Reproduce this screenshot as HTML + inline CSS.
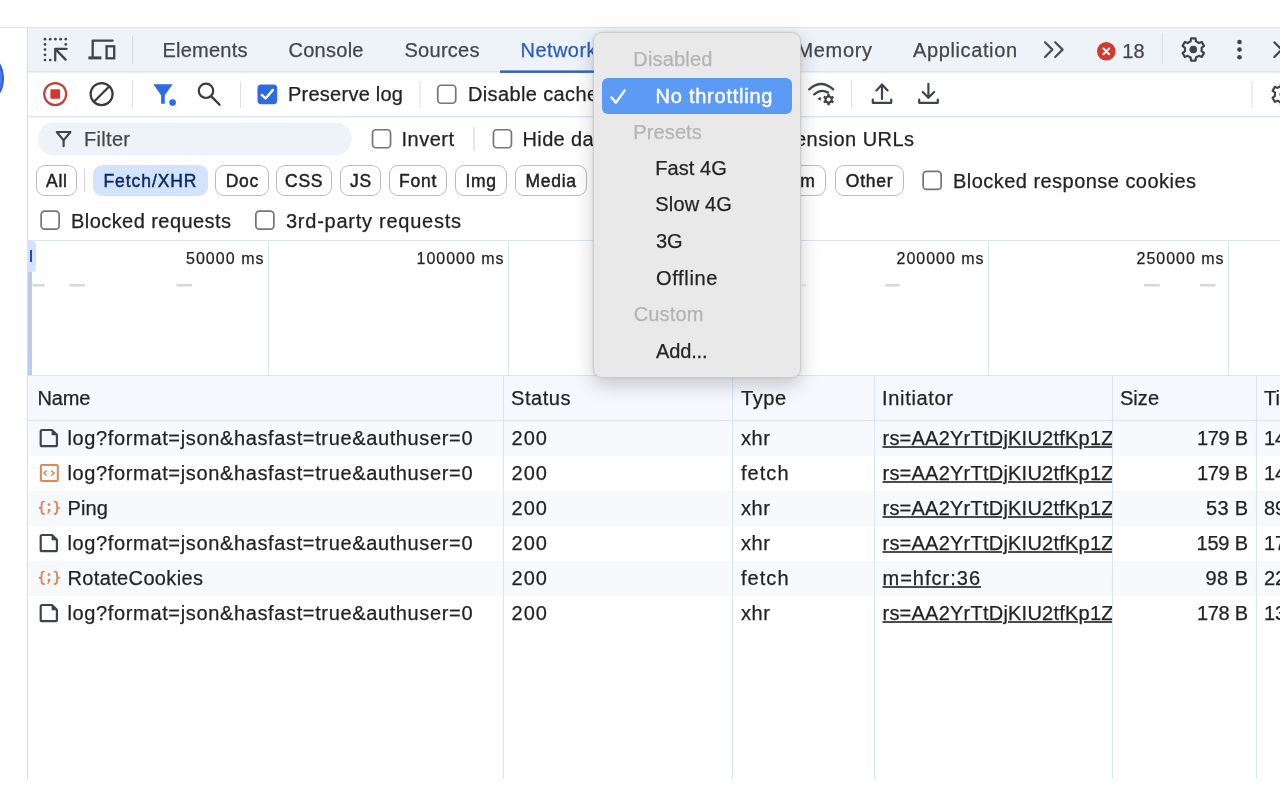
<!DOCTYPE html>
<html><head><meta charset="utf-8"><title>DevTools</title>
<style>
html,body{margin:0;padding:0;background:#fff}
body{width:1280px;height:800px;position:relative;overflow:hidden;font-family:"Liberation Sans",sans-serif;color:#1f1f1f}
#w{position:absolute;left:0;top:0;width:1280px;height:800px;overflow:hidden;will-change:transform}
.a{position:absolute;box-sizing:border-box}
.t{position:absolute;white-space:pre;line-height:24px;font-size:20px;-webkit-text-stroke-width:0.25px}
svg{position:absolute;overflow:visible}
</style></head><body><div id="w">
<div class="a" style="left:0px;top:27px;width:1280px;height:1px;background:#e1e4e9;"></div>
<div class="a" style="left:27px;top:28px;width:1px;height:751px;background:#d9dde6;"></div>
<div class="a" style="left:-57px;top:48px;width:61px;height:61px;border-radius:50%;border:2px solid #3a5fcc;background:#4a7af0"></div>
<div class="a" style="left:28px;top:28px;width:1252px;height:43px;background:#eef2f9;"></div>
<div class="a" style="left:28px;top:71px;width:1252px;height:1px;background:#dbe4f6;"></div>
<div class="a" style="left:28px;top:72px;width:1252px;height:1px;background:#ecf0f9;"></div>
<div class="a" style="left:28px;top:116px;width:1252px;height:1px;background:#dde5f6;"></div>
<div class="a" style="left:28px;top:117px;width:1252px;height:1px;background:#f1f4fb;"></div>
<svg style="left:0;top:0" width="400" height="200"><rect x="37.8" y="122.5" width="314" height="33" rx="16.5" fill="#eef2f9"/></svg>
<div class="a" style="left:28px;top:240px;width:1252px;height:1px;background:#dae4f7;"></div>
<div class="a" style="left:268px;top:241px;width:1px;height:134px;background:#dae4f7;"></div>
<div class="a" style="left:508px;top:241px;width:1px;height:134px;background:#dae4f7;"></div>
<div class="a" style="left:748px;top:241px;width:1px;height:134px;background:#dae4f7;"></div>
<div class="a" style="left:988px;top:241px;width:1px;height:134px;background:#dae4f7;"></div>
<div class="a" style="left:1228px;top:241px;width:1px;height:134px;background:#dae4f7;"></div>
<div class="a" style="left:28px;top:241px;width:4px;height:134px;background:#b9cdf3;"></div>
<div class="a" style="left:27px;top:241px;width:9px;height:31px;background:#d3e3fd;border-radius:0 4px 4px 0"></div>
<div class="a" style="left:30px;top:250px;width:2px;height:12px;background:#1a4fa8;"></div>
<div class="a" style="left:28px;top:375px;width:1252px;height:45px;background:#f6f8fd;"></div>
<div class="a" style="left:28px;top:375px;width:1252px;height:1px;background:#dae4f7;"></div>
<div class="a" style="left:28px;top:420px;width:1252px;height:1px;background:#dae4f7;"></div>
<div class="a" style="left:28px;top:421px;width:1252px;height:35px;background:#f7f9fd;"></div>
<div class="a" style="left:28px;top:491px;width:1252px;height:35px;background:#f7f9fd;"></div>
<div class="a" style="left:28px;top:561px;width:1252px;height:35px;background:#f7f9fd;"></div>
<div class="a" style="left:503px;top:376px;width:1px;height:403px;background:#dae4f7;"></div>
<div class="a" style="left:732px;top:376px;width:1px;height:403px;background:#dae4f7;"></div>
<div class="a" style="left:874px;top:376px;width:1px;height:403px;background:#dae4f7;"></div>
<div class="a" style="left:1112px;top:376px;width:1px;height:403px;background:#dae4f7;"></div>
<div class="a" style="left:1256px;top:376px;width:1px;height:403px;background:#dae4f7;"></div>
<span class="t" style="top:38.07px;font-size:20px;letter-spacing:0.232px;left:162.50px;color:#474747;">Elements</span>
<span class="t" style="top:38.07px;font-size:20px;letter-spacing:0.268px;left:288.50px;color:#474747;">Console</span>
<span class="t" style="top:38.07px;font-size:20px;letter-spacing:0.271px;left:404.50px;color:#474747;">Sources</span>
<span class="t" style="top:38.07px;font-size:20px;letter-spacing:0.440px;left:520.50px;color:#2a5cc0;">Network</span>
<span class="t" style="top:38.07px;font-size:20px;letter-spacing:0.653px;left:796.50px;color:#474747;">Memory</span>
<span class="t" style="top:38.07px;font-size:20px;letter-spacing:0.616px;left:913.00px;color:#474747;">Application</span>
<span class="t" style="top:39.27px;font-size:20px;left:1122.30px;color:#474747;">18</span>
<span class="t" style="top:82.07px;font-size:20px;letter-spacing:0.247px;left:288.00px;color:#232323;">Preserve log</span>
<span class="t" style="top:82.07px;font-size:20px;letter-spacing:0.365px;left:468.00px;color:#232323;">Disable cache</span>
<span class="t" style="top:127.32px;font-size:20px;letter-spacing:0.309px;left:84.00px;color:#474747;">Filter</span>
<span class="t" style="top:127.32px;font-size:20px;letter-spacing:0.494px;left:401.50px;color:#232323;">Invert</span>
<span class="t" style="top:127.32px;font-size:20px;letter-spacing:0.370px;left:522.50px;color:#232323;">Hide data URLs</span>
<span class="t" style="top:127.32px;font-size:20px;letter-spacing:0.451px;right:365.55px;color:#232323;">Hide extension URLs</span>
<span class="t" style="top:208.67px;font-size:20px;letter-spacing:0.439px;left:71.00px;color:#232323;">Blocked requests</span>
<span class="t" style="top:208.67px;font-size:20px;letter-spacing:0.747px;left:286.00px;color:#232323;">3rd-party requests</span>
<span class="t" style="top:168.67px;font-size:20px;letter-spacing:0.463px;left:953.00px;color:#232323;">Blocked response cookies</span>
<div class="a" style="left:36px;top:165px;width:41px;height:31px;border-radius:9px;background:#fff;border:1px solid #bcbcbc"></div>
<span class="t" style="top:169.14px;font-size:17.5px;letter-spacing:0.750px;left:46.02px;color:#232323;-webkit-text-stroke:0.45px #232323;">All</span>
<div class="a" style="left:84px;top:168px;width:1px;height:24px;background:#d5dbe8;"></div>
<div class="a" style="left:473px;top:127px;width:2px;height:24px;background:#e3e7f1;"></div>
<div class="a" style="left:92.5px;top:165px;width:115.0px;height:31px;border-radius:9px;background:#d3e3fd"></div>
<span class="t" style="top:169.14px;font-size:17.5px;letter-spacing:0.928px;left:103.50px;color:#0a2a63;-webkit-text-stroke:0.45px #0a2a63;">Fetch/XHR</span>
<div class="a" style="left:215px;top:165px;width:54px;height:31px;border-radius:9px;background:#fff;border:1px solid #bcbcbc"></div>
<span class="t" style="top:169.14px;font-size:17.5px;letter-spacing:0.750px;left:225.69px;color:#232323;-webkit-text-stroke:0.45px #232323;">Doc</span>
<div class="a" style="left:276px;top:165px;width:55.5px;height:31px;border-radius:9px;background:#fff;border:1px solid #bcbcbc"></div>
<span class="t" style="top:169.14px;font-size:17.5px;letter-spacing:0.750px;left:285.01px;color:#232323;-webkit-text-stroke:0.45px #232323;">CSS</span>
<div class="a" style="left:340px;top:165px;width:41px;height:31px;border-radius:9px;background:#fff;border:1px solid #bcbcbc"></div>
<span class="t" style="top:169.14px;font-size:17.5px;letter-spacing:0.750px;left:349.91px;color:#232323;-webkit-text-stroke:0.45px #232323;">JS</span>
<div class="a" style="left:389px;top:165px;width:57.5px;height:31px;border-radius:9px;background:#fff;border:1px solid #bcbcbc"></div>
<span class="t" style="top:169.14px;font-size:17.5px;letter-spacing:0.750px;left:399.11px;color:#232323;-webkit-text-stroke:0.45px #232323;">Font</span>
<div class="a" style="left:455px;top:165px;width:51.5px;height:31px;border-radius:9px;background:#fff;border:1px solid #bcbcbc"></div>
<span class="t" style="top:169.14px;font-size:17.5px;letter-spacing:0.750px;left:465.41px;color:#232323;-webkit-text-stroke:0.45px #232323;">Img</span>
<div class="a" style="left:515px;top:165px;width:71.5px;height:31px;border-radius:9px;background:#fff;border:1px solid #bcbcbc"></div>
<span class="t" style="top:169.14px;font-size:17.5px;letter-spacing:0.750px;left:525.41px;color:#232323;-webkit-text-stroke:0.45px #232323;">Media</span>
<div class="a" style="left:595px;top:165px;width:105px;height:31px;border-radius:9px;background:#fff;border:1px solid #bcbcbc"></div>
<span class="t" style="top:169.14px;font-size:17.5px;letter-spacing:0.750px;left:611.80px;color:#232323;-webkit-text-stroke:0.45px #232323;">Manifest</span>
<div class="a" style="left:708px;top:165px;width:42px;height:31px;border-radius:9px;background:#fff;border:1px solid #bcbcbc"></div>
<span class="t" style="top:169.14px;font-size:17.5px;letter-spacing:0.750px;left:714.52px;color:#232323;-webkit-text-stroke:0.45px #232323;">WS</span>
<div class="a" style="left:758px;top:165px;width:68px;height:31px;border-radius:9px;background:#fff;border:1px solid #bcbcbc"></div>
<span class="t" style="top:169.14px;font-size:17.5px;left:800.30px;color:#232323;-webkit-text-stroke:0.45px #232323;">m</span>
<div class="a" style="left:834.5px;top:165px;width:69.5px;height:31px;border-radius:9px;background:#fff;border:1px solid #bcbcbc"></div>
<span class="t" style="top:169.14px;font-size:17.5px;letter-spacing:0.750px;left:845.86px;color:#232323;-webkit-text-stroke:0.45px #232323;">Other</span>
<span class="t" style="top:246.76px;font-size:16px;letter-spacing:1.033px;right:1015.47px;color:#232323;">50000 ms</span>
<span class="t" style="top:246.76px;font-size:16px;letter-spacing:0.979px;right:775.52px;color:#232323;">100000 ms</span>
<span class="t" style="top:246.76px;font-size:16px;letter-spacing:0.979px;right:535.52px;color:#232323;">150000 ms</span>
<span class="t" style="top:246.76px;font-size:16px;letter-spacing:0.979px;right:295.52px;color:#232323;">200000 ms</span>
<span class="t" style="top:246.76px;font-size:16px;letter-spacing:0.979px;right:55.52px;color:#232323;">250000 ms</span>
<span class="t" style="top:385.57px;font-size:20px;letter-spacing:-0.120px;left:37.50px;color:#232323;">Name</span>
<span class="t" style="top:385.57px;font-size:20px;letter-spacing:0.559px;left:511.00px;color:#232323;">Status</span>
<span class="t" style="top:385.57px;font-size:20px;letter-spacing:0.547px;left:741.00px;color:#232323;">Type</span>
<span class="t" style="top:385.57px;font-size:20px;letter-spacing:0.676px;left:882.00px;color:#232323;">Initiator</span>
<span class="t" style="top:385.57px;font-size:20px;letter-spacing:0.031px;left:1120.00px;color:#232323;">Size</span>
<span class="t" style="top:385.57px;font-size:20px;letter-spacing:0.099px;left:1264.00px;color:#232323;">Time</span>
<span class="t" style="top:426.07px;font-size:20px;letter-spacing:0.637px;left:67.50px;color:#232323;">log?format=json&amp;hasfast=true&amp;authuser=0</span>
<span class="t" style="top:426.07px;font-size:20px;letter-spacing:1.062px;left:511.50px;color:#232323;">200</span>
<span class="t" style="top:426.07px;font-size:20px;letter-spacing:0.602px;left:741.00px;color:#232323;">xhr</span>
<div class="a" style="left:875px;top:420px;width:237px;height:35px;overflow:hidden">
<span class="t" style="left:7.5px;top:6.07px;letter-spacing:0.229px;color:#232323;text-decoration:underline;text-decoration-thickness:2px;text-decoration-color:#4c4c4c;text-underline-offset:0.8px">rs=AA2YrTtDjKIU2tfKp1Z</span></div>
<span class="t" style="top:426.07px;font-size:20px;letter-spacing:-0.316px;right:32.32px;color:#232323;">179 B</span>
<span class="t" style="top:426.07px;font-size:20px;left:1264.00px;color:#232323;">14</span>
<span class="t" style="top:461.07px;font-size:20px;letter-spacing:0.637px;left:67.50px;color:#232323;">log?format=json&amp;hasfast=true&amp;authuser=0</span>
<span class="t" style="top:461.07px;font-size:20px;letter-spacing:1.062px;left:511.50px;color:#232323;">200</span>
<span class="t" style="top:461.07px;font-size:20px;letter-spacing:1.035px;left:741.00px;color:#232323;">fetch</span>
<div class="a" style="left:875px;top:455px;width:237px;height:35px;overflow:hidden">
<span class="t" style="left:7.5px;top:6.07px;letter-spacing:0.229px;color:#232323;text-decoration:underline;text-decoration-thickness:2px;text-decoration-color:#4c4c4c;text-underline-offset:0.8px">rs=AA2YrTtDjKIU2tfKp1Z</span></div>
<span class="t" style="top:461.07px;font-size:20px;letter-spacing:-0.316px;right:32.32px;color:#232323;">179 B</span>
<span class="t" style="top:461.07px;font-size:20px;left:1264.00px;color:#232323;">14</span>
<span class="t" style="top:496.07px;font-size:20px;letter-spacing:0.156px;left:67.50px;color:#232323;">Ping</span>
<span class="t" style="top:496.07px;font-size:20px;letter-spacing:1.062px;left:511.50px;color:#232323;">200</span>
<span class="t" style="top:496.07px;font-size:20px;letter-spacing:0.602px;left:741.00px;color:#232323;">xhr</span>
<div class="a" style="left:875px;top:490px;width:237px;height:35px;overflow:hidden">
<span class="t" style="left:7.5px;top:6.07px;letter-spacing:0.229px;color:#232323;text-decoration:underline;text-decoration-thickness:2px;text-decoration-color:#4c4c4c;text-underline-offset:0.8px">rs=AA2YrTtDjKIU2tfKp1Z</span></div>
<span class="t" style="top:496.07px;font-size:20px;letter-spacing:0.281px;right:31.72px;color:#232323;">53 B</span>
<span class="t" style="top:496.07px;font-size:20px;left:1264.00px;color:#232323;">89</span>
<span class="t" style="top:531.07px;font-size:20px;letter-spacing:0.637px;left:67.50px;color:#232323;">log?format=json&amp;hasfast=true&amp;authuser=0</span>
<span class="t" style="top:531.07px;font-size:20px;letter-spacing:1.062px;left:511.50px;color:#232323;">200</span>
<span class="t" style="top:531.07px;font-size:20px;letter-spacing:0.602px;left:741.00px;color:#232323;">xhr</span>
<div class="a" style="left:875px;top:525px;width:237px;height:35px;overflow:hidden">
<span class="t" style="left:7.5px;top:6.07px;letter-spacing:0.229px;color:#232323;text-decoration:underline;text-decoration-thickness:2px;text-decoration-color:#4c4c4c;text-underline-offset:0.8px">rs=AA2YrTtDjKIU2tfKp1Z</span></div>
<span class="t" style="top:531.07px;font-size:20px;letter-spacing:-0.191px;right:32.19px;color:#232323;">159 B</span>
<span class="t" style="top:531.07px;font-size:20px;left:1264.00px;color:#232323;">17</span>
<span class="t" style="top:566.07px;font-size:20px;letter-spacing:0.359px;left:67.50px;color:#232323;">RotateCookies</span>
<span class="t" style="top:566.07px;font-size:20px;letter-spacing:1.062px;left:511.50px;color:#232323;">200</span>
<span class="t" style="top:566.07px;font-size:20px;letter-spacing:1.035px;left:741.00px;color:#232323;">fetch</span>
<div class="a" style="left:875px;top:560px;width:237px;height:35px;overflow:hidden">
<span class="t" style="left:7.5px;top:6.07px;letter-spacing:1.002px;color:#232323;text-decoration:underline;text-decoration-thickness:2px;text-decoration-color:#4c4c4c;text-underline-offset:0.8px">m=hfcr:36</span></div>
<span class="t" style="top:566.07px;font-size:20px;letter-spacing:0.448px;right:31.55px;color:#232323;">98 B</span>
<span class="t" style="top:566.07px;font-size:20px;left:1264.00px;color:#232323;">22</span>
<span class="t" style="top:601.07px;font-size:20px;letter-spacing:0.637px;left:67.50px;color:#232323;">log?format=json&amp;hasfast=true&amp;authuser=0</span>
<span class="t" style="top:601.07px;font-size:20px;letter-spacing:1.062px;left:511.50px;color:#232323;">200</span>
<span class="t" style="top:601.07px;font-size:20px;letter-spacing:0.602px;left:741.00px;color:#232323;">xhr</span>
<div class="a" style="left:875px;top:595px;width:237px;height:35px;overflow:hidden">
<span class="t" style="left:7.5px;top:6.07px;letter-spacing:0.229px;color:#232323;text-decoration:underline;text-decoration-thickness:2px;text-decoration-color:#4c4c4c;text-underline-offset:0.8px">rs=AA2YrTtDjKIU2tfKp1Z</span></div>
<span class="t" style="top:601.07px;font-size:20px;letter-spacing:-0.316px;right:32.32px;color:#232323;">178 B</span>
<span class="t" style="top:601.07px;font-size:20px;left:1264.00px;color:#232323;">13</span>
<div class="a" style="left:593px;top:32px;width:208px;height:346px;border-radius:9px;background:#e9e9e9;border:1px solid #cdcdcd;box-shadow:0 7px 20px rgba(0,0,0,0.20),0 0 3px rgba(0,0,0,0.10)"></div>
<div class="a" style="left:602px;top:78px;width:190px;height:36px;border-radius:6px;background:#5c9bf5"></div>
<svg style="left:608px;top:86px" width="22" height="22" viewBox="0 0 22 22"><path d="M3.6 11.6 L8.0 16.6 L16.6 4.6" fill="none" stroke="#fff" stroke-width="2.4" stroke-linecap="round" stroke-linejoin="round"/></svg>
<span class="t" style="top:46.82px;font-size:20px;letter-spacing:0.167px;left:633.30px;color:#b4b4b4;">Disabled</span>
<span class="t" style="top:83.57px;font-size:20px;letter-spacing:0.763px;left:655.50px;color:#fff;-webkit-text-stroke:0.45px #fff;">No throttling</span>
<span class="t" style="top:119.82px;font-size:20px;letter-spacing:0.115px;left:633.30px;color:#b4b4b4;">Presets</span>
<span class="t" style="top:156.07px;font-size:20px;letter-spacing:0.060px;left:655.30px;color:#262626;">Fast 4G</span>
<span class="t" style="top:192.07px;font-size:20px;letter-spacing:0.151px;left:655.30px;color:#262626;">Slow 4G</span>
<span class="t" style="top:228.57px;font-size:20px;letter-spacing:-0.188px;left:656.00px;color:#262626;">3G</span>
<span class="t" style="top:265.57px;font-size:20px;letter-spacing:0.674px;left:656.00px;color:#262626;">Offline</span>
<span class="t" style="top:302.07px;font-size:20px;letter-spacing:0.119px;left:633.80px;color:#b4b4b4;">Custom</span>
<span class="t" style="top:338.57px;font-size:20px;letter-spacing:-0.153px;left:656.00px;color:#262626;">Add...</span>
<svg style="left:0;top:0" width="1280" height="800" viewBox="0 0 1280 800"><rect x="500" y="70.4" width="94" height="2.5" fill="#3561bd"/>
<circle cx="45" cy="39.2" r="1.35" fill="#3f444b"/>
<circle cx="50.2" cy="39.2" r="1.35" fill="#3f444b"/>
<circle cx="55.4" cy="39.2" r="1.35" fill="#3f444b"/>
<circle cx="60.6" cy="39.2" r="1.35" fill="#3f444b"/>
<circle cx="65.8" cy="39.2" r="1.35" fill="#3f444b"/>
<circle cx="45" cy="44.4" r="1.35" fill="#3f444b"/>
<circle cx="45" cy="49.6" r="1.35" fill="#3f444b"/>
<circle cx="45" cy="54.8" r="1.35" fill="#3f444b"/>
<circle cx="45" cy="60" r="1.35" fill="#3f444b"/>
<circle cx="65.8" cy="44.4" r="1.35" fill="#3f444b"/>
<circle cx="50.2" cy="60" r="1.35" fill="#3f444b"/>
<path d="M66.6 48.8 H55.2 V60.4 M56 49.6 L65.6 59.6" fill="none" stroke="#3f444b" stroke-width="2.3" stroke-linecap="round" stroke-linejoin="round" stroke-linecap="butt"/>
<path d="M112.6 40.6 H92.7 V57" fill="none" stroke="#3f444b" stroke-width="2.3" stroke-linecap="round" stroke-linejoin="round" stroke-linecap="butt"/>
<rect x="88.4" y="56.4" width="13" height="3" fill="#3f444b"/>
<rect x="106.6" y="46.3" width="7.6" height="12" fill="none" stroke="#3f444b" stroke-width="2.3"/>
<rect x="132" y="36" width="1" height="28" fill="#d5dbe8"/>
<rect x="1162" y="33" width="1" height="31" fill="#d5dbe8"/>
<circle cx="55.2" cy="94.1" r="11" fill="none" stroke="#bf4238" stroke-width="2.2"/>
<rect x="50.4" y="89.2" width="9.6" height="9.6" rx="0.8" fill="#d9362b"/>
<circle cx="101.6" cy="94.1" r="11" fill="none" stroke="#3a3a3a" stroke-width="2.2"/>
<path d="M93.9 101.8 L109.4 86.3" fill="none" stroke="#3a3a3a" stroke-width="2.2" stroke-linecap="round" stroke-linejoin="round" />
<rect x="132" y="81" width="1" height="27" fill="#dcdfe6"/>
<rect x="240" y="81" width="1" height="27" fill="#dcdfe6"/>
<rect x="419.5" y="81" width="1" height="27" fill="#dcdfe6"/>
<rect x="851" y="81" width="1" height="27" fill="#dcdfe6"/>
<rect x="1251.5" y="81" width="1" height="27" fill="#dcdfe6"/>
<path d="M153.3 84.3 H172.7 L164.8 95.2 V103.8 H161.1 V95.2 Z" fill="#2e6be6"/>
<circle cx="172.6" cy="102.6" r="3.3" fill="#2e6be6"/>
<circle cx="206" cy="90.8" r="7.2" fill="none" stroke="#3a3a3a" stroke-width="2.2"/>
<path d="M211.3 96.4 L219.6 104.8" fill="none" stroke="#3a3a3a" stroke-width="2.3" stroke-linecap="round" stroke-linejoin="round" />
<path d="M809.2 89.4 Q821 78.6 833.2 89.4" fill="none" stroke="#3f444b" stroke-width="2.3" stroke-linecap="round" stroke-linejoin="round" />
<path d="M814.2 94.4 Q821 88.4 828 92.6" fill="none" stroke="#3f444b" stroke-width="2.3" stroke-linecap="round" stroke-linejoin="round" />
<path d="M817.4 98.7 L820.8 96.7 V100.7 Z" fill="#3f444b"/>
<path d="M827.47 94.01 L829.73 94.01 L829.94 95.62 L831.38 96.45 L832.88 95.83 L834.00 97.78 L832.72 98.77 L832.72 100.43 L834.00 101.42 L832.88 103.37 L831.38 102.75 L829.94 103.58 L829.73 105.19 L827.47 105.19 L827.26 103.58 L825.82 102.75 L824.32 103.37 L823.20 101.42 L824.48 100.43 L824.48 98.77 L823.20 97.78 L824.32 95.83 L825.82 96.45 L827.26 95.62 Z" fill="#3f444b"/>
<circle cx="828.6" cy="99.6" r="2.0" fill="#fff"/>
<path d="M882 99 V84.6 M876.4 90.4 L882 84.6 L887.6 90.4" fill="none" stroke="#3f444b" stroke-width="2.2" stroke-linecap="round" stroke-linejoin="round" />
<path d="M872.8 99.6 V102.8 H891.2 V99.6" fill="none" stroke="#3f444b" stroke-width="2.2" stroke-linecap="round" stroke-linejoin="round" />
<path d="M928.4 83.8 V97.6 M922.7 92 L928.4 97.8 L934.1 92" fill="none" stroke="#3f444b" stroke-width="2.2" stroke-linecap="round" stroke-linejoin="round" />
<path d="M919.2 99.6 V102.8 H937.8 V99.6" fill="none" stroke="#3f444b" stroke-width="2.2" stroke-linecap="round" stroke-linejoin="round" />
<path d="M1045 42.2 L1052.4 49.6 L1045 57" fill="none" stroke="#4a4f57" stroke-width="2.2" stroke-linecap="round" stroke-linejoin="round" />
<path d="M1055.2 42.2 L1062.6 49.6 L1055.2 57" fill="none" stroke="#4a4f57" stroke-width="2.2" stroke-linecap="round" stroke-linejoin="round" />
<circle cx="1106.3" cy="51.3" r="9.3" fill="#d23a30"/>
<path d="M1103.4 48.4 L1109.2 54.2 M1109.2 48.4 L1103.4 54.2" fill="none" stroke="#fff" stroke-width="2" stroke-linecap="round" stroke-linejoin="round" />
<path d="M1191.07 38.37 L1195.53 38.37 L1196.01 41.39 L1198.92 43.07 L1201.78 41.98 L1204.01 45.85 L1201.63 47.77 L1201.63 51.13 L1204.01 53.05 L1201.78 56.92 L1198.92 55.83 L1196.01 57.51 L1195.53 60.53 L1191.07 60.53 L1190.59 57.51 L1187.68 55.83 L1184.82 56.92 L1182.59 53.05 L1184.97 51.13 L1184.97 47.77 L1182.59 45.85 L1184.82 41.98 L1187.68 43.07 L1190.59 41.39 Z" fill="none" stroke="#3f444b" stroke-width="2.2" stroke-linejoin="round"/>
<circle cx="1193.3" cy="49.45" r="3.8" fill="#3f444b"/>
<path d="M1281.07 83.22 L1285.53 83.22 L1286.01 86.24 L1288.92 87.92 L1291.78 86.83 L1294.01 90.70 L1291.63 92.62 L1291.63 95.98 L1294.01 97.90 L1291.78 101.77 L1288.92 100.68 L1286.01 102.36 L1285.53 105.38 L1281.07 105.38 L1280.59 102.36 L1277.68 100.68 L1274.82 101.77 L1272.59 97.90 L1274.97 95.98 L1274.97 92.62 L1272.59 90.70 L1274.82 86.83 L1277.68 87.92 L1280.59 86.24 Z" fill="none" stroke="#3f444b" stroke-width="2.2" stroke-linejoin="round"/>
<circle cx="1283.3" cy="94.3" r="3.8" fill="#3f444b"/>
<circle cx="1239.5" cy="42" r="2.3" fill="#3f444b"/>
<circle cx="1239.5" cy="49.6" r="2.3" fill="#3f444b"/>
<circle cx="1239.5" cy="57.2" r="2.3" fill="#3f444b"/>
<path d="M1274.3 42.3 L1289 57 M1289 42.3 L1274.3 57" fill="none" stroke="#3f444b" stroke-width="2.2" stroke-linecap="round" stroke-linejoin="round" />
<path d="M56.8 132 H70.4 L63.6 140.4 Z M63.6 140.4 V146.2" fill="none" stroke="#3f444b" stroke-width="2.2" stroke-linecap="round" stroke-linejoin="round" />
<path d="M42.2 430.0 H52 L56.9 434.9 V444.7 Q56.9 446.2 55.4 446.2 H42.2 Q40.7 446.2 40.7 444.7 V431.5 Q40.7 430.0 42.2 430.0 Z" fill="none" stroke="#3f444b" stroke-width="2.2" stroke-linecap="round" stroke-linejoin="round" />
<path d="M51.6 430.0 V435.3 H56.9 Z" fill="#3f444b"/>
<rect x="40.9" y="465.0" width="16.9" height="16" rx="1" fill="none" stroke="#d98a5f" stroke-width="2.1"/>
<path d="M46.4 470.9 L43.8 473.09999999999997 L46.4 475.29999999999995 M51.6 470.9 L54.2 473.09999999999997 L51.6 475.29999999999995" fill="none" stroke="#d98a5f" stroke-width="1.5" stroke-linecap="round" stroke-linejoin="round" />
<path d="M44 501.6 Q41.6 501.6 41.6 504.0 V506.20000000000005 Q41.6 507.8 39.6 507.8 Q41.6 507.8 41.6 509.40000000000003 V511.6 Q41.6 514.0 44 514.0" fill="none" stroke="#d98a5f" stroke-width="1.9" stroke-linecap="round" stroke-linejoin="round" />
<path d="M54.6 501.6 Q57 501.6 57 504.0 V506.20000000000005 Q57 507.8 59 507.8 Q57 507.8 57 509.40000000000003 V511.6 Q57 514.0 54.6 514.0" fill="none" stroke="#d98a5f" stroke-width="1.9" stroke-linecap="round" stroke-linejoin="round" />
<circle cx="49" cy="504.6" r="1.4" fill="#d98a5f"/>
<circle cx="49" cy="510.20000000000005" r="1.4" fill="#d98a5f"/>
<path d="M49.4 510.6 L48 513.2" fill="none" stroke="#d98a5f" stroke-width="1.4" stroke-linecap="round" stroke-linejoin="round" />
<path d="M42.2 535.0 H52 L56.9 539.9 V549.6999999999999 Q56.9 551.1999999999999 55.4 551.1999999999999 H42.2 Q40.7 551.1999999999999 40.7 549.6999999999999 V536.5 Q40.7 535.0 42.2 535.0 Z" fill="none" stroke="#3f444b" stroke-width="2.2" stroke-linecap="round" stroke-linejoin="round" />
<path d="M51.6 535.0 V540.3 H56.9 Z" fill="#3f444b"/>
<path d="M44 571.6 Q41.6 571.6 41.6 574.0 V576.2 Q41.6 577.8000000000001 39.6 577.8000000000001 Q41.6 577.8000000000001 41.6 579.4 V581.6 Q41.6 584.0 44 584.0" fill="none" stroke="#d98a5f" stroke-width="1.9" stroke-linecap="round" stroke-linejoin="round" />
<path d="M54.6 571.6 Q57 571.6 57 574.0 V576.2 Q57 577.8000000000001 59 577.8000000000001 Q57 577.8000000000001 57 579.4 V581.6 Q57 584.0 54.6 584.0" fill="none" stroke="#d98a5f" stroke-width="1.9" stroke-linecap="round" stroke-linejoin="round" />
<circle cx="49" cy="574.6" r="1.4" fill="#d98a5f"/>
<circle cx="49" cy="580.2" r="1.4" fill="#d98a5f"/>
<path d="M49.4 580.6 L48 583.2" fill="none" stroke="#d98a5f" stroke-width="1.4" stroke-linecap="round" stroke-linejoin="round" />
<path d="M42.2 605.0 H52 L56.9 609.9 V619.6999999999999 Q56.9 621.1999999999999 55.4 621.1999999999999 H42.2 Q40.7 621.1999999999999 40.7 619.6999999999999 V606.5 Q40.7 605.0 42.2 605.0 Z" fill="none" stroke="#3f444b" stroke-width="2.2" stroke-linecap="round" stroke-linejoin="round" />
<path d="M51.6 605.0 V610.3 H56.9 Z" fill="#3f444b"/>
<rect x="257.5" y="84.5" width="19.7" height="19.7" rx="3.6" fill="#2f6be0"/>
<path d="M261.8 94.9 L265.6 98.5 L272.9 89.9" fill="none" stroke="#fff" stroke-width="2.4" stroke-linecap="round" stroke-linejoin="round" />
<rect x="437.75" y="85.25" width="18.0" height="18.0" rx="3.4" fill="#fff" stroke="#757575" stroke-width="1.7"/>
<rect x="372.55" y="129.75" width="18.0" height="18.0" rx="3.4" fill="#fff" stroke="#757575" stroke-width="1.7"/>
<rect x="493.45000000000005" y="129.75" width="18.0" height="18.0" rx="3.4" fill="#fff" stroke="#757575" stroke-width="1.7"/>
<rect x="923.15" y="171.45" width="18.0" height="18.0" rx="3.4" fill="#fff" stroke="#757575" stroke-width="1.7"/>
<rect x="41.15" y="211.04999999999998" width="18.0" height="18.0" rx="3.4" fill="#fff" stroke="#757575" stroke-width="1.7"/>
<rect x="255.85" y="211.04999999999998" width="18.0" height="18.0" rx="3.4" fill="#fff" stroke="#757575" stroke-width="1.7"/>
<rect x="32.5" y="284.1" width="12.299999999999997" height="2.5" rx="0.8" fill="#d8d8d8"/>
<rect x="69.3" y="284.1" width="15.700000000000003" height="2.5" rx="0.8" fill="#d8d8d8"/>
<rect x="176.3" y="284.1" width="15.699999999999989" height="2.5" rx="0.8" fill="#d8d8d8"/>
<rect x="801.5" y="284.1" width="5.0" height="2.5" rx="0.8" fill="#d8d8d8"/>
<rect x="885" y="284.1" width="15" height="2.5" rx="0.8" fill="#d8d8d8"/>
<rect x="1144" y="284.1" width="15.799999999999955" height="2.5" rx="0.8" fill="#d8d8d8"/>
<rect x="1200" y="284.1" width="15.599999999999909" height="2.5" rx="0.8" fill="#d8d8d8"/></svg>
</div></body></html>
